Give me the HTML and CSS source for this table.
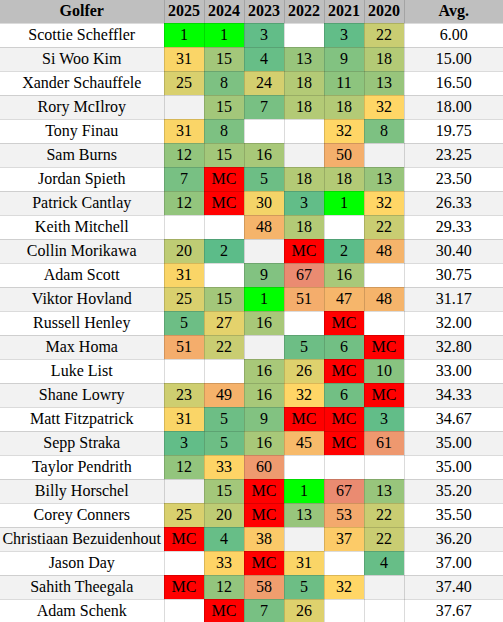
FILE: index.html
```html
<!DOCTYPE html>
<html lang="en">
  <head>
    <title>Golfer finishes</title>
    <meta charset="UTF-8">
    <meta name="viewport" content="width=device-width, initial-scale=1">
    <link rel="stylesheet" href="styles.css">
  </head>
  <body>
    <table class="finishes">
      <colgroup>
        <col class="col-name">
        <col class="col-year"><col class="col-year"><col class="col-year">
        <col class="col-year"><col class="col-year"><col class="col-year">
        <col class="col-avg">
      </colgroup>
      <thead>
        <tr>
          <th>Golfer</th>
          <th>2025</th>
          <th>2024</th>
          <th>2023</th>
          <th>2022</th>
          <th>2021</th>
          <th>2020</th>
          <th>Avg.</th>
        </tr>
      </thead>
      <tbody class="finishes__body"></tbody>
    </table>
    <script src="script.js"></script>
  </body>
</html>
```

FILE: styles.css
```css
* {
  box-sizing: border-box;
}
html, body {
  margin: 0;
  padding: 0;
  background: #fff;
  font-family: "Liberation Serif", "Times New Roman", Times, serif;
  color: #000;
}

.finishes {
  width: 503px;
  table-layout: fixed;
  border-collapse: collapse;
  font-size: 16px;
}
.col-name { width: 164px; }
.col-year { width: 40px; }
.col-avg { width: 99px; }

.finishes th,
.finishes td {
  padding: 0;
  height: 24px;
  text-align: center;
  vertical-align: middle;
  white-space: nowrap;
  border: 1px solid rgba(0, 0, 0, 0.14);
}
.finishes th {
  height: 23px;
  background-color: #bfbfbf;
  font-weight: bold;
}
.finishes thead tr th { border-top: none; }
.finishes tr > :first-child { border-left: none; }
.finishes tr > :last-child { border-right: none; }

.finishes tbody tr:nth-child(odd) { background-color: #fff; }
.finishes tbody tr:nth-child(even) { background-color: #f2f2f2; }

.cell-win { background-color: #00ff00; }
.cell-cut { background-color: #ff0000; }
```

FILE: script.js
```js
// [name, 2025, 2024, 2023, 2022, 2021, 2020, avg]  (null = didn't play, 'MC' = missed cut)
const rows = [
  ['Scottie Scheffler', 1, 1, 3, null, 3, 22, '6.00'],
  ['Si Woo Kim', 31, 15, 4, 13, 9, 18, '15.00'],
  ['Xander Schauffele', 25, 8, 24, 18, 11, 13, '16.50'],
  ['Rory McIlroy', null, 15, 7, 18, 18, 32, '18.00'],
  ['Tony Finau', 31, 8, null, null, 32, 8, '19.75'],
  ['Sam Burns', 12, 15, 16, null, 50, null, '23.25'],
  ['Jordan Spieth', 7, 'MC', 5, 18, 18, 13, '23.50'],
  ['Patrick Cantlay', 12, 'MC', 30, 3, 1, 32, '26.33'],
  ['Keith Mitchell', null, null, 48, 18, null, 22, '29.33'],
  ['Collin Morikawa', 20, 2, null, 'MC', 2, 48, '30.40'],
  ['Adam Scott', 31, null, 9, 67, 16, null, '30.75'],
  ['Viktor Hovland', 25, 15, 1, 51, 47, 48, '31.17'],
  ['Russell Henley', 5, 27, 16, null, 'MC', null, '32.00'],
  ['Max Homa', 51, 22, null, 5, 6, 'MC', '32.80'],
  ['Luke List', null, null, 16, 26, 'MC', 10, '33.00'],
  ['Shane Lowry', 23, 49, 16, 32, 6, 'MC', '34.33'],
  ['Matt Fitzpatrick', 31, 5, 9, 'MC', 'MC', 3, '34.67'],
  ['Sepp Straka', 3, 5, 16, 45, 'MC', 61, '35.00'],
  ['Taylor Pendrith', 12, 33, 60, null, null, null, '35.00'],
  ['Billy Horschel', null, 15, 'MC', 1, 67, 13, '35.20'],
  ['Corey Conners', 25, 20, 'MC', 13, 53, 22, '35.50'],
  ['Christiaan Bezuidenhout', 'MC', 4, 38, null, 37, 22, '36.20'],
  ['Jason Day', null, 33, 'MC', 31, null, 4, '37.00'],
  ['Sahith Theegala', 'MC', 12, 58, 5, 32, null, '37.40'],
  ['Adam Schenk', null, 'MC', 7, 26, null, null, '37.67']
];

// green -> yellow -> red scale, like a spreadsheet colour rule
const LOW = [87, 187, 138], MID = [255, 214, 102], HIGH = [230, 124, 115];
const MIN = 1, MIDV = 32, MAX = 74;

function mix(a, b, t) {
  return a.map((v, i) => Math.round(v + (b[i] - v) * t));
}
function scaleColor(n) {
  const rgb = n <= MIDV
    ? mix(LOW, MID, (n - MIN) / (MIDV - MIN))
    : mix(MID, HIGH, Math.min(1, (n - MIDV) / (MAX - MIDV)));
  return `rgb(${rgb.join(',')})`;
}

const body = document.querySelector('.finishes__body');
rows.forEach(row => {
  const tr = document.createElement('tr');
  row.forEach((val, i) => {
    const td = document.createElement('td');
    if (val !== null) td.textContent = val;
    if (i > 0 && i < 7 && val !== null) {
      if (val === 'MC') td.className = 'cell-cut';
      else if (val === 1) td.className = 'cell-win';
      else td.style.backgroundColor = scaleColor(val);
    }
    tr.appendChild(td);
  });
  body.appendChild(tr);
});
```
